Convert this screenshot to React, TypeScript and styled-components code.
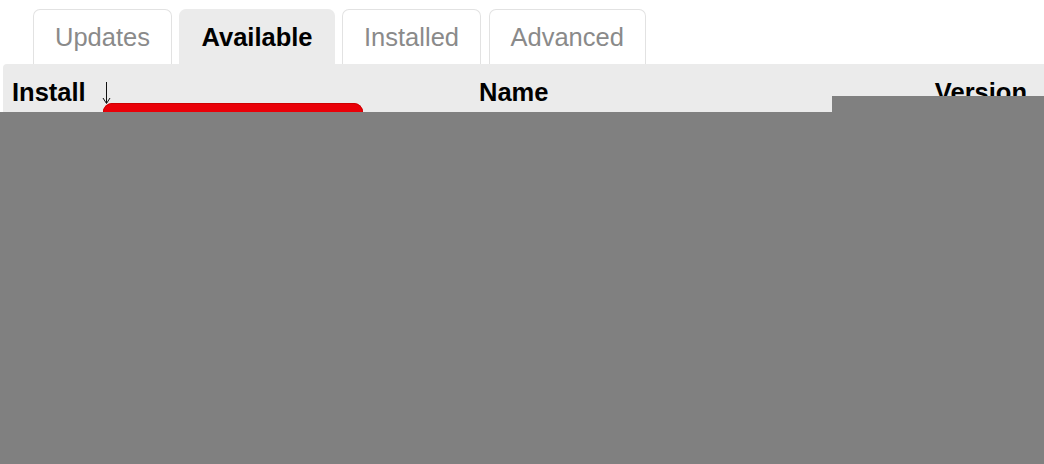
import React from 'react';
import styled, { createGlobalStyle } from 'styled-components';

const GlobalStyle = createGlobalStyle`
  html, body {
    margin: 0;
    padding: 0;
    background: #ffffff;
    font-family: "Liberation Sans", Arial, Helvetica, sans-serif;
  }
`;

const Page = styled.div`
  position: relative;
  width: 1044px;
  height: 464px;
  overflow: hidden;
  padding-top: 9px;
  box-sizing: border-box;
`;

const TabBar = styled.ul`
  display: flex;
  gap: 7.5px;
  list-style: none;
  margin: 0;
  padding: 0 0 0 33px;
`;

const Tab = styled.li<{ $active?: boolean }>`
  display: flex;
  align-items: center;
  height: 55px;
  box-sizing: border-box;
  padding: 0 21px;
  border: 1px solid ${(p) => (p.$active ? '#ebebeb' : '#e2e2e2')};
  border-bottom: none;
  border-radius: 7px 7px 0 0;
  background: ${(p) => (p.$active ? '#ebebeb' : '#ffffff')};
  color: ${(p) => (p.$active ? '#000000' : '#8a8a8a')};
  font-size: 25.5px;
  font-weight: ${(p) => (p.$active ? 700 : 400)};
`;

const HeaderRow = styled.div`
  display: flex;
  align-items: flex-start;
  margin-left: 3px;
  height: 60px;
  padding: 13px 17px 0 9px;
  box-sizing: border-box;
  background: #ebebeb;
  border-radius: 4px 0 0 0;
`;

const HeaderCell = styled.div<{ $width?: number; $align?: string }>`
  display: flex;
  align-items: flex-start;
  flex: ${(p) => (p.$width ? `0 0 ${p.$width}px` : '1')};
  justify-content: ${(p) => p.$align || 'flex-start'};
  font-size: 25.5px;
  line-height: 30px;
  font-weight: 700;
  color: #000000;
`;

const SortArrow = styled.svg`
  margin: 5px 0 0 16px;
  flex: none;
`;

const Highlight = styled.div`
  position: absolute;
  left: 103px;
  top: 103px;
  width: 260px;
  height: 40px;
  border-radius: 9px;
  background: #ea0008;
  box-shadow: inset 0 0 0 1px #cc0000;
`;

const Shade = styled.div`
  position: absolute;
  left: 0;
  right: 0;
  top: 112px;
  bottom: 0;
  background: #808080;
`;

const ShadeTab = styled.div`
  position: absolute;
  left: 832px;
  right: 0;
  top: 96px;
  height: 16px;
  background: #808080;
`;

const App: React.FC = () => {
  return (
    <>
      <GlobalStyle />
      <Page>
        <TabBar>
          <Tab>Updates</Tab>
          <Tab $active>Available</Tab>
          <Tab>Installed</Tab>
          <Tab>Advanced</Tab>
        </TabBar>
        <HeaderRow>
          <HeaderCell $width={467}>
            Install
            <SortArrow width="9" height="22" viewBox="0 0 9 22" aria-hidden="true">
              <line x1="4.5" y1="0" x2="4.5" y2="21" stroke="#111" strokeWidth="1" />
              <path d="M1 16 L4.5 21.5 L8 16" fill="none" stroke="#111" strokeWidth="1" />
            </SortArrow>
          </HeaderCell>
          <HeaderCell>Name</HeaderCell>
          <HeaderCell $width={200} $align="flex-end">
            Version
          </HeaderCell>
        </HeaderRow>
        <Highlight />
        <ShadeTab />
        <Shade />
      </Page>
    </>
  );
};

export default App;
